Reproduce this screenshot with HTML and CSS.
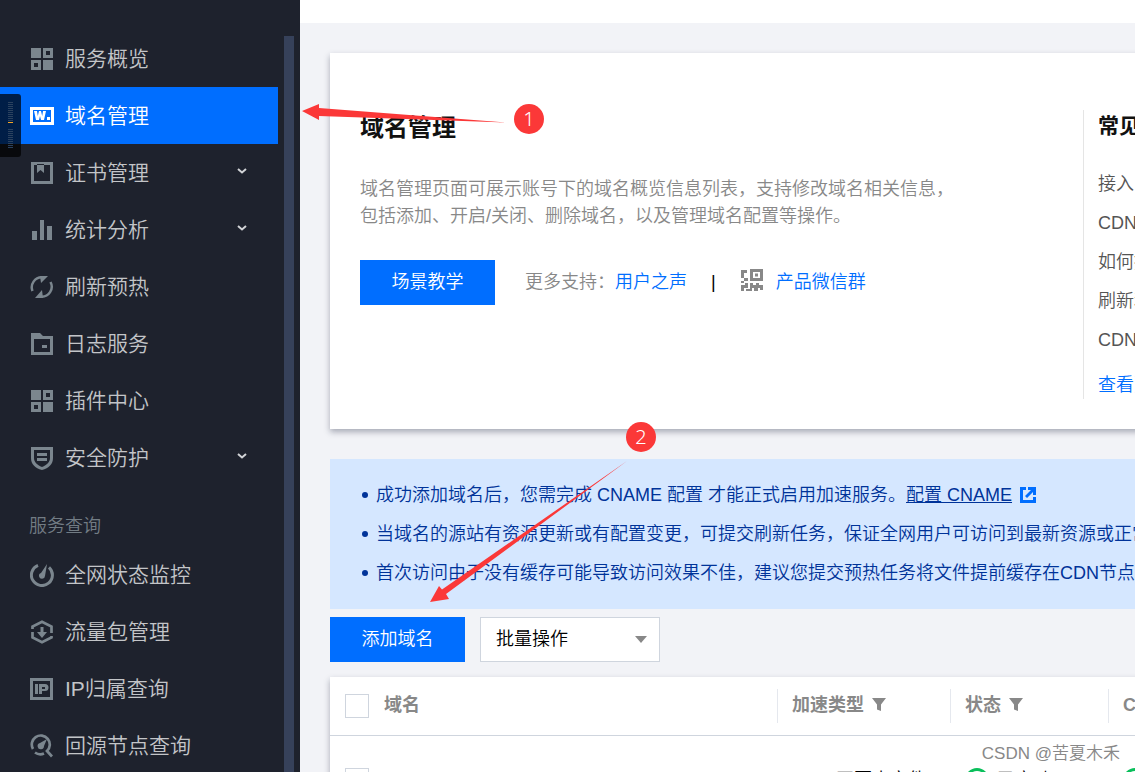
FILE: index.html
```html
<!DOCTYPE html>
<html lang="zh-CN">
<head>
<meta charset="utf-8">
<meta name="viewport" content="width=device-width, initial-scale=1">
<title>域名管理</title>
<link rel="stylesheet" href="styles.css">
</head>
<body>
<svg class="sprite" aria-hidden="true">
  <symbol id="i-grid" viewBox="0 0 24 24"><path fill-rule="evenodd" d="M1 1h10v10H1zM13 1h10v10H13zM16 4v4h4V4zM1 13h10v10H1zM4 16v4h4v-4zM13 13h10v10H13z"/></symbol>
  <symbol id="i-domain" viewBox="0 0 24 24"><path fill-rule="evenodd" d="M0 3h24v18H0zM3 6v12h18V6z"/><path d="M4 7h3l.8 5L9 7h2l1.200 5L13 7h3l-2 9h-3l-1-4-1 4H6zM17 13h3v3h-3z"/></symbol>
  <symbol id="i-cert" viewBox="0 0 24 24"><path fill-rule="evenodd" d="M1 1h22v22H1zM4 4v16h16V4zM7 3h7v9l-3.500-3L7 12z"/></symbol>
  <symbol id="i-stats" viewBox="0 0 24 24"><path d="M2 13h5v9H2zM10 2h4v20h-4zM17 8h5v14h-5z"/></symbol>
  <symbol id="i-refresh" viewBox="0 0 24 24"><path fill="none" stroke="currentColor" stroke-width="2.500" d="M2.500 16A10 10 0 0 1 12 2.300M20.500 7A10 10 0 0 1 11 21.700"/><path d="M10 1h8l-7 7zM13 23H5l7-8z"/></symbol>
  <symbol id="i-log" viewBox="0 0 24 24"><path fill-rule="evenodd" d="M1 1h9l3 3h10v19H1zM4 7v13h16V7zM12 13h5v3h-5z"/></symbol>
  <symbol id="i-shield" viewBox="0 0 24 24"><path fill-rule="evenodd" d="M1 1h22v11c0 6-4 10-11 12C5 22 1 18 1 12zM4 4v8c0 4 3 7 8 9 5-2 8-5 8-9V4zM7 7h10v3H7zM7 12h10v3H7z"/></symbol>
  <symbol id="i-monitor" viewBox="0 0 24 24"><path fill="none" stroke="currentColor" stroke-width="3" d="M8 2.300A10.500 10.500 0 1 0 19 4.300"/><path d="M17 1l-2 12a3 3 0 1 1-4-3z"/></symbol>
  <symbol id="i-package" viewBox="0 0 24 24"><path fill="none" stroke="currentColor" stroke-width="2.700" d="M2.500 9V6.500L12 1.700l9.500 4.800V13M21.500 16v1.500L12 22.300l-9.500-4.800V12"/><path d="M10.500 7h3v5H17l-5 6-5-6h3.500z"/></symbol>
  <symbol id="i-ip" viewBox="0 0 24 24"><path fill-rule="evenodd" d="M0 1h23v22H0zM3 4v16h17V4zM5 7h3v10H5zM9 7h6a3.500 3.500 0 0 1 0 7h-3v3H9zM12 10v2h3v-2z"/></symbol>
  <symbol id="i-source" viewBox="0 0 24 24"><path fill="none" stroke="currentColor" stroke-width="2.700" d="M3 15A9 9 0 1 1 17 17L22 22.500M5 18.500a9 9 0 0 0 9 1"/><path d="M17 5l-3 7a3.200 3.200 0 1 1-4-3z"/></symbol>
  <symbol id="i-chevron" viewBox="0 0 10 8"><path fill="none" stroke="currentColor" stroke-width="2" d="M1 2l4 3.500L9 2"/></symbol>
  <symbol id="i-filter" viewBox="0 0 14 14"><path d="M0 0h14L9 6.500V13L5 11.500V6.500z"/></symbol>
  <symbol id="i-ok" viewBox="0 0 24 24"><circle cx="12" cy="12" r="10.500" fill="none" stroke="currentColor" stroke-width="3"/><path fill="none" stroke="currentColor" stroke-width="2.500" d="M7 12l4 4 7-7"/></symbol>
</svg>

<div class="app">
  <aside class="sidebar">
    <nav class="nav" aria-label="主导航">
      <a class="nav-item" href="#"><svg class="icon"><use href="#i-grid"/></svg><span>服务概览</span></a>
      <a class="nav-item active" href="#"><svg class="icon"><use href="#i-domain"/></svg><span>域名管理</span></a>
      <a class="nav-item" href="#"><svg class="icon"><use href="#i-cert"/></svg><span>证书管理</span><svg class="chevron"><use href="#i-chevron"/></svg></a>
      <a class="nav-item" href="#"><svg class="icon"><use href="#i-stats"/></svg><span>统计分析</span><svg class="chevron"><use href="#i-chevron"/></svg></a>
      <a class="nav-item" href="#"><svg class="icon"><use href="#i-refresh"/></svg><span>刷新预热</span></a>
      <a class="nav-item" href="#"><svg class="icon"><use href="#i-log"/></svg><span>日志服务</span></a>
      <a class="nav-item" href="#"><svg class="icon"><use href="#i-grid"/></svg><span>插件中心</span></a>
      <a class="nav-item" href="#"><svg class="icon"><use href="#i-shield"/></svg><span>安全防护</span><svg class="chevron"><use href="#i-chevron"/></svg></a>
      <div class="nav-label">服务查询</div>
      <a class="nav-item" href="#"><svg class="icon"><use href="#i-monitor"/></svg><span>全网状态监控</span></a>
      <a class="nav-item" href="#"><svg class="icon"><use href="#i-package"/></svg><span>流量包管理</span></a>
      <a class="nav-item" href="#"><svg class="icon"><use href="#i-ip"/></svg><span>IP归属查询</span></a>
      <a class="nav-item" href="#"><svg class="icon"><use href="#i-source"/></svg><span>回源节点查询</span></a>
    </nav>
    <div class="scroll-thumb"></div>
    <div class="dock-tab"><i class="ticks"></i><i class="tick-mark"></i><i class="ticks"></i></div>
  </aside>

  <div class="page">
    <header class="topbar"></header>
    <main class="content">
      <section class="card intro">
        <div class="intro-main">
          <h1>域名管理</h1>
          <p>域名管理页面可展示账号下的域名概览信息列表，支持修改域名相关信息，<br>包括添加、开启/关闭、删除域名，以及管理域名配置等操作。</p>
          <div class="support">
            <button class="btn" type="button">场景教学</button>
            <span class="support-label">更多支持：</span>
            <a href="#">用户之声</a>
            <span class="bar">|</span>
            <svg class="qr" viewBox="0 0 22 22"><path fill-rule="evenodd" d="M0 1h6v3H3v5H0zM9 0h13v12H9zM12 3v6h7V3zM14 4.500h3v3h-3zM3 9h4v3H3zM0 12h3v2H0zM0 16h4v-2h3v5H3v3H0zM9 14h3v2h3v-2h3v2h4v5h-3v-2h-2v3h-4v-3h-2v3H5v-2h4z"/></svg>
            <a href="#">产品微信群</a>
          </div>
        </div>
        <aside class="faq">
          <h2>常见问题</h2>
          <ul>
            <li><a href="#">接入 CDN</a></li>
            <li><a href="#">CDN 计费</a></li>
            <li><a href="#">如何提升命中率</a></li>
            <li><a href="#">刷新和预热</a></li>
            <li><a href="#">CDN 回源</a></li>
          </ul>
          <a class="more" href="#">查看更多</a>
        </aside>
      </section>

      <ul class="notice">
        <li><span>成功添加域名后，您需完成 CNAME 配置 才能正式启用加速服务。<a href="#">配置 CNAME</a></span><svg class="external" viewBox="0 0 16 16"><path d="M0 0h6v3H3v10h10v-3h3v6H0zM8 0h8v8h-3V5l-6 6-2-2 6-6H8z"/></svg></li>
        <li><span>当域名的源站有资源更新或有配置变更，可提交刷新任务，保证全网用户可访问到最新资源或正常</span></li>
        <li><span>首次访问由于没有缓存可能导致访问效果不佳，建议您提交预热任务将文件提前缓存在CDN节点</span></li>
      </ul>

      <div class="toolbar">
        <button class="btn" type="button">添加域名</button>
        <div class="select">
          <select aria-label="批量操作"><option>批量操作</option></select>
          <svg class="caret" viewBox="0 0 12 7"><path d="M0 0h12L6 7z"/></svg>
        </div>
      </div>

      <div class="card list">
        <table>
          <thead>
            <tr>
              <th class="c-domain"><div class="cell"><input type="checkbox" aria-label="全选"><span>域名</span></div></th>
              <th class="c-type"><div class="cell"><span>加速类型</span><svg class="filter"><use href="#i-filter"/></svg></div></th>
              <th class="c-state"><div class="cell"><span>状态</span><svg class="filter"><use href="#i-filter"/></svg></div></th>
              <th><div class="cell"><span>CNAME</span></div></th>
            </tr>
          </thead>
          <tbody>
            <tr>
              <td><div class="cell"><input type="checkbox" aria-label="选择域名"></div></td>
              <td><div class="cell">CDN 网页小文件</div></td>
              <td><div class="cell"><svg class="ok"><use href="#i-ok"/></svg><span>已启动</span></div></td>
              <td><div class="cell"><svg class="ok"><use href="#i-ok"/></svg></div></td>
            </tr>
          </tbody>
        </table>
      </div>
    </main>
  </div>

  <svg class="arrows" width="700" height="620" viewBox="0 0 700 620" aria-hidden="true">
    <path d="M302 111L319 104V108L506 122.500 319 116V120z"/>
    <path d="M430 602L439 586 442 589.500 627 461 446 594 449 599z"/>
  </svg>
  <span class="step step-one">1</span>
  <span class="step step-two">2</span>
  <span class="watermark">CSDN @苦夏木禾</span>
</div>
</body>
</html>
```

FILE: styles.css
```css
* { box-sizing: border-box; }

body {
  margin: 0;
  overflow: hidden;
  font-family: "Liberation Sans", "Noto Sans CJK SC", sans-serif;
  font-size: 18px;
  font-weight: 350;
  line-height: 27px;
  color: #000;
}

a { color: #006eff; text-decoration: none; }
h1, h2, p, ul { margin: 0; padding: 0; }
ul { list-style: none; }
svg { fill: currentColor; flex: none; }
.sprite { position: absolute; width: 0; height: 0; }

.app {
  position: relative;
  display: flex;
  height: 100vh;
  overflow: hidden;
}

/* Sidebar */
.sidebar {
  position: relative;
  display: flex;
  justify-content: space-between;
  flex: 0 0 300px;
  padding-right: 6px;
  background: #1e222d;
}
.nav { flex: 0 0 278px; padding-top: 30px; }
.nav-item {
  display: flex;
  align-items: center;
  gap: 11px;
  height: 57px;
  padding: 0 30px;
  font-size: 21px;
  color: #c3c5c8;
}
.nav-item.active { background: #006eff; color: #fff; }
.icon { width: 24px; height: 24px; color: #7b868e; }
.active .icon { color: #fff; }
.chevron { width: 10px; height: 8px; margin: 0 1px 4px auto; color: #d2d4d7; }
.nav-label { height: 60px; padding: 27px 29px 0; color: #727c84; }
.scroll-thumb { width: 10px; margin-top: 36px; background: #36415a; }

.dock-tab {
  position: absolute;
  top: 94px;
  left: 0;
  display: flex;
  flex-direction: column;
  align-items: flex-start;
  gap: 1px;
  width: 21px;
  height: 63px;
  padding: 8px;
  border-radius: 0 3px 3px 0;
  background: rgba(0, 0, 0, .72);
}
.ticks {
  width: 5px;
  height: 19px;
  background: repeating-linear-gradient(#2b425f 0 1px, transparent 1px 2px);
}
.tick-mark { width: 5px; height: 1px; margin-bottom: 5px; background: #f5a623; }

/* Page */
.page { flex: 1; min-width: 0; background: #f2f3f7; }
.topbar { height: 23px; background: #fff; }
.content { padding: 30px 0 0 30px; }
.card { background: #fff; box-shadow: 0 3px 6px rgba(30, 34, 60, .35); }

.btn {
  width: 135px;
  height: 45px;
  padding: 0;
  border: 0;
  background: #006eff;
  color: #fff;
  font: inherit;
}

.intro {
  display: flex;
  margin-right: -10px;
  padding: 57px 10px 30px 30px;
  white-space: nowrap;
}
.intro-main { flex: 1; min-width: 0; }
.intro h1 { margin-bottom: 30px; font-size: 24px; line-height: 36px; color: #111; }
.intro p { margin-bottom: 30px; color: #888; }
.support { display: flex; align-items: center; }
.support-label { margin-left: 30px; color: #888; }
.bar { margin: 0 25px 0 24px; }
.qr { width: 22px; height: 22px; margin: 0 13px 6px 0; color: #888; }

.faq {
  flex: 0 0 52px;
  padding-left: 14px;
  overflow: hidden;
  border-left: 1px solid #e5e5e5;
}
.faq h2 { margin-bottom: 23px; font-size: 21px; line-height: 32px; color: #111; }
.faq li { line-height: 39px; }
.faq li a { color: #555; }
.faq .more { display: block; margin-top: 12px; }

.notice {
  margin: 30px 0 8px;
  padding: 17px 0 16px 32px;
  overflow: hidden;
  background: #d5e7ff;
  color: #003399;
  line-height: 39px;
  white-space: nowrap;
}
.notice li { display: flex; align-items: center; }
.notice li::before {
  content: "";
  flex: none;
  width: 6px;
  height: 6px;
  margin: 0 8px 2px 0;
  border-radius: 50%;
  background: #003399;
}
.notice a { color: inherit; text-decoration: underline; }
.external { width: 16px; height: 16px; margin: 0 0 2px 8px; color: #006eff; }

.toolbar { display: flex; gap: 15px; margin-bottom: 15px; }
.select { position: relative; width: 180px; }
.select select {
  width: 100%;
  height: 45px;
  padding: 0 15px;
  border: 1px solid #cfd5de;
  border-radius: 0;
  background: #fff;
  color: #000;
  font: inherit;
  appearance: none;
}
.caret {
  position: absolute;
  top: 19px;
  right: 13px;
  width: 12px;
  height: 7px;
  color: #888;
  pointer-events: none;
}

/* Domain list */
.list { margin-right: -10px; padding-right: 10px; }
table { width: 100%; border-collapse: collapse; table-layout: fixed; white-space: nowrap; }
th, td { padding: 0; overflow: hidden; text-align: left; }
thead tr { height: 58px; border-bottom: 1px solid #cfd5de; }
tbody tr { height: 90px; }
.c-domain { width: 448px; }
.c-type { width: 173px; }
.c-state { width: 158px; }
.cell { display: flex; align-items: center; height: 34px; padding: 0 14px; }
th .cell { gap: 8px; border-right: 1px solid #e5e8ee; color: #888; }
td .cell { gap: 8px; }
input[type="checkbox"] {
  flex: none;
  width: 24px;
  height: 24px;
  margin: 0 7px 0 1px;
  border: 1px solid #cfd5de;
  background: #fff;
  appearance: none;
}
.filter { width: 14px; height: 14px; margin-bottom: 2px; }
.ok { width: 24px; height: 24px; color: #0abf5b; }

/* Annotations floating over the page */
.arrows { position: absolute; top: 0; left: 0; color: #fb3838; pointer-events: none; }
.step {
  position: absolute;
  width: 30px;
  height: 30px;
  border-radius: 50%;
  background: #fb3838;
  color: #fff;
  font-family: "Noto Sans", sans-serif;
  font-size: 20px;
  font-weight: 300;
  line-height: 29px;
  text-align: center;
}
.step-one { top: 104px; left: 514px; }
.step-two { top: 422px; left: 626px; }
.watermark {
  position: absolute;
  right: 15px;
  bottom: 5px;
  font-size: 17px;
  color: #888;
}
```
